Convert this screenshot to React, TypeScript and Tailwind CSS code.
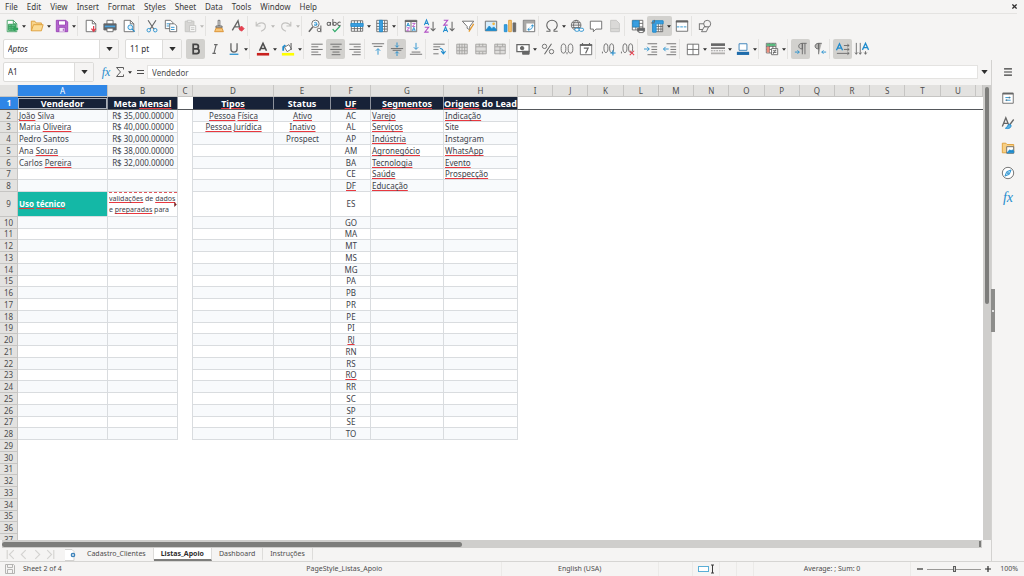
import { useState } from 'react'
import type { ReactNode } from 'react'
import clsx from 'clsx'

const GREY = '#666666'
const BLUE = '#1e8bcd'
const PURPLE = '#b14fc5'
const FADED = '#c4c3c1'

/* ---------- Icons ---------- */

interface IconProps {
  children: ReactNode
  stroke?: string
}

function Icon({ children, stroke = GREY }: IconProps) {
  return (
    <svg viewBox="0 0 16 16" className="size-[14px] shrink-0 overflow-visible" fill="none" stroke={stroke} strokeWidth="1">
      {children}
    </svg>
  )
}

function mergeIcon(middle: string) {
  return (
    <Icon stroke="#a3a2a0">
      <path d="M2 2.500h12v11H2z" fill="#dddcda" />
      <path d={middle} />
    </Icon>
  )
}

const icons = {
  newSheet: (
    <Icon stroke="#3a9d5d">
      <path d="M2.500 1.500h7l4 4v9h-11z" fill="#fff" />
      <path d="M4 6h8v7H4zM4 8.500h8M4 10.500h8M7 6v7" fill="#5fc488" />
      <path d="M9.500 1.500v4h4" />
      <path d="M8 11l4-3v2h3v2.500h-3v2z" fill="#2fa35c" stroke="none" />
    </Icon>
  ),
  open: (
    <Icon stroke="#dd9c35">
      <path d="M1.500 13.500v-11h4l1.500 2h6v2.500" fill="#f7d48c" />
      <path d="M1.500 13.500l2.500-7h11l-2 7z" fill="#fbdb96" />
    </Icon>
  ),
  save: (
    <Icon stroke="#9741b4">
      <path d="M1.500 1.500h11l2 2v11h-13z" fill="#b565cf" />
      <path d="M4 2h8v5H4z" fill="#fff" />
      <path d="M4.500 14.500v-5h7v5" fill="#f4e7f8" />
      <path d="M9.500 11v2.500" />
    </Icon>
  ),
  pdf: (
    <Icon>
      <path d="M2.500 1.500h7l4 4v9h-11z" fill="#fff" />
      <path d="M9.500 1.500v4h4" />
      <path d="M11 8v5M8.500 11l2.500 3 2.500-3" stroke="#e03b4b" strokeWidth="1.400" />
    </Icon>
  ),
  print: (
    <Icon>
      <path d="M4.500 6V1.500h7V6" fill="#fff" />
      <path d="M1 5.500h14v7H1z" fill="#5f6469" />
      <path d="M2 8.500h12" stroke="#4aa3df" strokeWidth="2" />
      <path d="M4.500 10.500h7v4h-7z" fill="#fff" />
    </Icon>
  ),
  preview: (
    <Icon>
      <path d="M2.500 1.500h7l4 4v9h-11z" fill="#fff" />
      <path d="M9.500 1.500v4h4" />
      <circle cx="9.500" cy="9.500" r="2.700" fill="#dff0fb" stroke={BLUE} />
      <path d="M11.500 11.500l3 3" stroke={BLUE} strokeWidth="1.400" />
    </Icon>
  ),
  cut: (
    <Icon>
      <path d="M3.500 1.500l6.500 10M12.500 1.500L6 11.500" strokeWidth="1.300" />
      <circle cx="4.300" cy="12.800" r="2" stroke={BLUE} />
      <circle cx="11.700" cy="12.800" r="2" stroke={BLUE} />
    </Icon>
  ),
  copy: (
    <Icon>
      <path d="M1.500 1.500h6l2.500 2.500v7h-8.500z" fill="#fff" />
      <path d="M3 5.500h4M3 8h3" stroke={BLUE} />
      <path d="M6.500 5.500h5.500l2.500 2.500v6.500h-8z" fill="#fff" />
      <path d="M8 9.500h4M8 12h4" stroke={BLUE} />
    </Icon>
  ),
  paste: (
    <Icon stroke={FADED}>
      <path d="M2.500 2.500h10v12h-10z" fill="#d6d5d3" />
      <path d="M5 1.500h5v2H5z" fill="#fff" />
      <path d="M7.500 7.500h7v7h-7z" fill="#f7f7f6" />
      <path d="M9 10h4M9 12h4" />
    </Icon>
  ),
  brush: (
    <Icon>
      <path d="M7 1.500h2V8H7z" fill="#fff" />
      <path d="M4.500 8h7v2h-7z" fill="#c6c6c6" />
      <path d="M4.500 10.500h7l1.500 4H3z" fill="#f7c577" stroke="#d98e2b" />
    </Icon>
  ),
  clearFormat: (
    <Icon>
      <path d="M1.500 13L8 2l2.500 11M4 9h6" strokeWidth="1.600" />
      <path d="M9 11l3-3 3 3-3 3z" fill="#e4404f" stroke="#e4404f" />
    </Icon>
  ),
  undo: (
    <Icon stroke={FADED}>
      <path d="M2.500 3v5h5M2.500 8C5 3.500 12.500 3 13 8c.2 3-2 5-5 6" strokeWidth="1.300" />
    </Icon>
  ),
  redo: (
    <Icon stroke={FADED}>
      <path d="M13.500 3v5h-5M13.500 8C11 3.500 3.500 3 3 8c-.2 3 2 5 5 6" strokeWidth="1.300" />
    </Icon>
  ),
  find: (
    <Icon>
      <circle cx="8.500" cy="5.500" r="4.200" fill="#fff" />
      <path d="M5.500 9l-4.500 5.500" strokeWidth="1.800" />
      <path d="M7 4.500c1-1 3-1 3 .500v2.500M10 5.800c-3-.3-3.500 1.700-1.800 1.700 1 0 1.800-.500 1.800-1.700" stroke={BLUE} />
      <circle cx="12.500" cy="12.500" r="2" />
      <path d="M14.700 7.500V15" strokeWidth="1.200" />
    </Icon>
  ),
  spelling: (
    <Icon>
      <circle cx="2" cy="5.500" r="1.900" strokeWidth="1.200" />
      <path d="M4 3.500v4M6.700 0v7.500" strokeWidth="1.200" />
      <circle cx="8.800" cy="5.500" r="1.900" strokeWidth="1.200" />
      <path d="M15.500 4a2 2 0 100 3" strokeWidth="1.200" />
      <path d="M6.500 11.500l2.500 3 6-6.500" stroke="#2faa6a" strokeWidth="1.400" />
    </Icon>
  ),
  row: (
    <Icon>
      <path d="M1.500 2h13v12h-13zM1.500 11h13M5 2v12M8.500 2v12M12 2v12" fill="#fff" />
      <path d="M1 5h14v3.500H1z" fill="#3a9ee0" stroke={BLUE} />
    </Icon>
  ),
  column: (
    <Icon>
      <path d="M2 1.500h12v13H2zM2 5h12M2 8.500h12M2 11.500h12M11 1.500v13" fill="#fff" />
      <path d="M5 1.500h3.500v13H5z" fill="#3a9ee0" stroke={BLUE} />
    </Icon>
  ),
  sort: (
    <Icon>
      <path d="M1.500 1.500h13v13h-13zM8 3v11" fill="#fff" />
      <path d="M1 2.500h14" strokeWidth="2" />
      <path d="M3 8.500l1.700-4 1.700 4M3.500 7.500h2.500M9.500 13.500l1.700-4 1.700 4M10 12.500h2.500" stroke={BLUE} />
      <path d="M3 10h3.300L3 13.500h3.300M9.500 5h3.300L9.500 8.500h3.300" stroke={PURPLE} />
    </Icon>
  ),
  sortAsc: (
    <Icon>
      <path d="M1.500 7l2.500-6 2.500 6M2.300 5h3.400" stroke={BLUE} strokeWidth="1.200" />
      <path d="M2 9.500h4.500L2 15h4.500" stroke={PURPLE} strokeWidth="1.200" />
      <path d="M11.500 3v10.500M8.800 10.800l2.700 2.700 2.700-2.700" strokeWidth="1.200" />
    </Icon>
  ),
  sortDesc: (
    <Icon>
      <path d="M2 1.500h4.500L2 7h4.500" stroke={PURPLE} strokeWidth="1.200" />
      <path d="M1.500 15L4 9l2.500 6M2.300 13h3.400" stroke={BLUE} strokeWidth="1.200" />
      <path d="M11.500 3v10.500M8.800 10.800l2.700 2.700 2.700-2.700" strokeWidth="1.200" />
    </Icon>
  ),
  filter: (
    <Icon>
      <path d="M1.500 2.500h13L10 8.500v4l-3-2V8.500z" fill="#fff" />
      <path d="M9 14.500l5.500-9" stroke="#e69a2d" strokeWidth="1.400" />
    </Icon>
  ),
  image: (
    <Icon>
      <path d="M1.500 2.500h13v11h-13z" fill="#d7edfb" />
      <path d="M2 13l4-5 3 3 2-2 3 3v1z" fill={BLUE} stroke={BLUE} />
      <circle cx="11" cy="5.500" r="1.500" fill="#f5b43c" stroke="none" />
    </Icon>
  ),
  chart: (
    <Icon>
      <path d="M1.500 6.500h3v8h-3z" fill="#3a9ee0" stroke={BLUE} />
      <path d="M6.500 1.500h3v13h-3z" fill="#f7c577" stroke="#dd9c35" />
      <path d="M11.500 4.500h3v10h-3z" fill="#6d6d6d" />
    </Icon>
  ),
  pivot: (
    <Icon>
      <path d="M1.500 1.500h13v13h-13z" fill="#fff" />
      <path d="M2 3.500h12M3.500 2v12" strokeWidth="3" stroke="#a9a8a6" />
      <path d="M7 12c4 0 5-1 5-5M10.300 8.500L12 6.500l1.500 2M8.500 10.300L6.500 12l2 1.500" stroke={BLUE} />
    </Icon>
  ),
  omega: (
    <Icon>
      <path d="M1.500 14h4.200v-1.500C3 11 2 9 2 7a6 5.500 0 0112 0c0 2-1 4-3.700 5.500V14h4.200" strokeWidth="1.200" />
    </Icon>
  ),
  link: (
    <Icon>
      <circle cx="7" cy="7" r="5.500" />
      <path d="M1.500 7h11M7 1.500c-4 3-4 8 0 11M7 1.500c4 3 4 8 0 11M2.500 4.200h9M2.500 9.800h9" />
      <rect x="5.500" y="10.500" width="5" height="3.500" rx="1.700" fill="#fff" stroke={BLUE} />
      <rect x="10.500" y="10.500" width="5" height="3.500" rx="1.700" fill="#fff" stroke={BLUE} />
    </Icon>
  ),
  comment: (
    <Icon>
      <path d="M1.500 2.500h13v9H8l-3 3v-3H1.500z" fill="#fff" />
    </Icon>
  ),
  headerFooter: (
    <Icon stroke={FADED}>
      <path d="M3 1.500h6.500l3.500 3.500v9.500H3z" fill="#dad9d7" />
      <path d="M3 11h10" />
    </Icon>
  ),
  printArea: (
    <Icon>
      <path d="M1.500 1.500h12v11h-12zM1.500 5h12M1.500 9h12M5.500 1.500v11M9.500 1.500v11" fill="#fff" />
      <path d="M2 2h7v7H2z" fill="#3a9ee0" stroke={BLUE} />
      <path d="M7.500 10.500h8v3.500h-8z" fill="#5f6469" />
      <path d="M9 13h5v2.500H9z" fill="#fff" />
    </Icon>
  ),
  freeze: (
    <Icon>
      <path d="M3.500 2.500h11v12h-11zM3.500 8.500h11M3.500 11.500h11M9.500 2.500v12M12.500 2.500v12" fill="#fff" />
      <path d="M3 2h12v3.500H7V15H3z" fill="#3a9ee0" stroke={BLUE} />
      <path d="M1 4.500h4M5 1v3" />
    </Icon>
  ),
  split: (
    <Icon>
      <path d="M1.500 2h13v12h-13z" fill="#fff" />
      <path d="M1 3h14" strokeWidth="2" />
      <path d="M2 9h12" stroke={BLUE} strokeDasharray="3 1" />
    </Icon>
  ),
  shapes: (
    <Icon>
      <rect x="1.500" y="5.500" width="6.500" height="6.500" />
      <circle cx="10.500" cy="5.500" r="4" fill="#f5f4f3" />
      <path d="M4 14.500l3-5.500h5l-2.500 5.500z" fill="#f5f4f3" />
    </Icon>
  ),
  bold: <Icon><path d="M4.800 2.800h3.400a2.500 2.500 0 010 5.100H4.800zM4.800 7.900h4a2.700 2.700 0 010 5.400h-4z" stroke="#444" strokeWidth="2" /></Icon>,
  italic: (
    <Icon>
      <path d="M7 3h4M5 13h4M9.300 3l-2.500 10" strokeWidth="1.300" />
    </Icon>
  ),
  underline: (
    <Icon>
      <path d="M4.500 1.500v6.500a3.500 3.500 0 007 0V1.500" strokeWidth="1.500" />
      <path d="M3 14h10" stroke={BLUE} strokeWidth="1.400" />
    </Icon>
  ),
  fontColor: (
    <Icon>
      <path d="M4 10L8 1.500l4 8.500M5.500 7.500h5" stroke="#4d4d4d" strokeWidth="1.800" />
      <path d="M1 14h14" stroke="#c9211e" strokeWidth="3" />
    </Icon>
  ),
  highlight: (
    <Icon>
      <path d="M4 6l5-3 3 5-5 3z" fill="#fff" />
      <path d="M11.500 1v8" strokeWidth="1.300" />
      <path d="M2.500 10V5.500l2.500-2" stroke={BLUE} strokeWidth="2" />
      <path d="M1 14h14" stroke="#ffff00" strokeWidth="3" />
    </Icon>
  ),
  alignLeft: <Icon><path d="M1.500 2.500h13M1.500 5.500h8M1.500 8.500h13M1.500 11.500h8M1.500 14.500h11" /></Icon>,
  alignCenter: <Icon><path d="M1.500 2.500h13M4 5.500h8M1.500 8.500h13M4 11.500h8M3 14.500h10" /></Icon>,
  alignRight: <Icon><path d="M1.500 2.500h13M6.500 5.500h8M1.500 8.500h13M6.500 11.500h8M4.500 14.500h10" /></Icon>,
  alignTop: (
    <Icon>
      <path d="M1 2h14M3 5h10" />
      <path d="M8 14.500V8M5.500 10L8 7.500l2.500 2.500" stroke={BLUE} />
    </Icon>
  ),
  alignMiddle: (
    <Icon>
      <path d="M1 7.500h14M3 9.500h10" />
      <path d="M8 .500V6M6 4l2 2 2-2M8 16v-5M6 13l2-2 2 2" stroke={BLUE} />
    </Icon>
  ),
  alignBottom: (
    <Icon>
      <path d="M1 14h14M3 11.500h10" />
      <path d="M8 1v7M5.500 6L8 8.500 10.500 6" stroke={BLUE} />
    </Icon>
  ),
  wrap: (
    <Icon>
      <path d="M1.500 2.500h13M1.500 5.500h8M1.500 8.500h6M1.500 13.500h6" />
      <path d="M9 7.500c3 0 4 1.500 4 5M10.500 10.500l2.500 3 2.500-3" stroke={BLUE} strokeWidth="1.200" />
    </Icon>
  ),
  mergeCenter: mergeIcon('M2 6h12M2 10h12M5 2v12M8 2v12M11 2v12'),
  mergeCells: mergeIcon('M2 5.500h12M2 10.500h12M6 2v3M10 2v3M6 11v3M10 11v3'),
  unmerge: mergeIcon('M2 5.500h12M2 9.500h12M8 5v9M5 2v3M11 2v3'),
  currency: (
    <Icon>
      <path d="M1 3h14v8H1z" fill="#fff" strokeWidth="1.400" />
      <circle cx="7" cy="7" r="2" fill={GREY} />
      <path d="M7.500 10.500h7.500v3.500H7.500z" fill={GREY} />
    </Icon>
  ),
  percent: (
    <Icon>
      <circle cx="4" cy="5" r="2.500" />
      <circle cx="12" cy="11" r="2.500" />
      <path d="M12 2L4 14" strokeWidth="1.200" />
    </Icon>
  ),
  number: (
    <Icon>
      <ellipse cx="4" cy="7.500" rx="2.700" ry="5.300" />
      <ellipse cx="12" cy="7.500" rx="2.700" ry="5.300" />
      <path d="M8 11.500v2.500" />
    </Icon>
  ),
  date: (
    <Icon>
      <path d="M1.500 3h13v11.500h-13z" fill="#fff" />
      <path d="M1 3.500h14" strokeWidth="2" />
      <path d="M4 1v3M12 1v3M5.500 7h5l-3 6" strokeWidth="1.300" />
    </Icon>
  ),
  addDecimal: (
    <Icon>
      <path d="M.500 11v2" />
      <ellipse cx="4.500" cy="7" rx="2.300" ry="5" />
      <ellipse cx="11" cy="7" rx="2.300" ry="5" />
      <path d="M12.500 9.500v6M9.500 12.500h6" stroke={BLUE} strokeWidth="1.200" />
    </Icon>
  ),
  removeDecimal: (
    <Icon>
      <path d="M.500 11v2" />
      <ellipse cx="4.500" cy="7" rx="2.300" ry="5" />
      <ellipse cx="11" cy="7" rx="2.300" ry="5" />
      <path d="M10 10l5 5M15 10l-5 5" stroke="#e4404f" strokeWidth="1.200" />
    </Icon>
  ),
  indent: (
    <Icon>
      <path d="M4 2h11M8.500 5.500H15M8.500 8.500H15M8.500 11.500H15M4 14.500h11" />
      <path d="M0 8h6M3.500 5.500L6 8l-2.500 2.500" stroke={BLUE} />
    </Icon>
  ),
  outdent: (
    <Icon>
      <path d="M4 2h11M8.500 5.500H15M8.500 8.500H15M8.500 11.500H15M4 14.500h11" />
      <path d="M6.500 8H.700M3 5.500L.500 8 3 10.500" stroke={BLUE} />
    </Icon>
  ),
  borders: <Icon><path d="M1.500 2.500h13v12h-13zM1.500 8.500h13M8 2.500v12" fill="#fff" /></Icon>,
  borderStyle: (
    <Icon>
      <path d="M0 3h16" strokeWidth="3" />
      <path d="M0 7h16" strokeWidth="1.600" />
      <path d="M0 10h16" stroke="#8d8d8d" strokeDasharray="2 1" />
      <path d="M0 13h16" stroke="#b0afad" strokeWidth="2" />
    </Icon>
  ),
  borderColor: (
    <Icon>
      <path d="M3.500 2h9v7.500h-9z" fill="#fff" stroke="#2d79b5" />
      <path d="M1 13h14" stroke="#1f6cab" strokeWidth="3.600" />
    </Icon>
  ),
  conditional: (
    <Icon>
      <path d="M1.500 1.500h11v11h-11zM1.500 5h11M1.500 8.500h11M5 1.500v11M9 1.500v11" fill="#fff" />
      <path d="M2 2h10v2.500H2z" fill="#57b97c" stroke="none" />
      <path d="M2 5.500h3V12H2z" fill="#eb8d7c" stroke="none" />
      <path d="M7.500 7.500h7v7h-7z" fill="#fff" />
      <path d="M9 10h4M9 12h4M12.500 8.500l-3 5" />
    </Icon>
  ),
  leftToRight: (
    <Icon>
      <path d="M9.500 14V1.500h5M12.500 1.500V14M9.500 8C4 8 4 1.500 9.500 1.500z" fill="#c9c8c6" />
      <path d="M1 11.500h5M4 9.500l2 2-2 2" stroke={BLUE} />
    </Icon>
  ),
  rightToLeft: (
    <Icon>
      <path d="M6.500 14V1.500h3.500M6.500 8C1 8 1 1.500 6.500 1.500z" fill="#b5b4b2" />
      <path d="M15 11.500h-5M12 9.500l-2 2 2 2" stroke={BLUE} />
    </Icon>
  ),
  textHorizontal: (
    <Icon>
      <path d="M.500 9.500L4 2l3.500 7.500M2 7h4" stroke={BLUE} strokeWidth="1.500" />
      <path d="M9 4h6M13 2.500L15 4l-2 1.500M9 8.500h6M13 7l2 1.500-2 1.500M1 13h14M13 11.500l2 1.500-2 1.500" />
    </Icon>
  ),
  textVertical: (
    <Icon>
      <path d="M8.500 9L12 1.500 15.500 9M10 6.500h4" stroke={BLUE} strokeWidth="1.500" />
      <path d="M1.500 1v13M0 12l1.500 2L3 12M6 1v13M4.500 12L6 14l1.500-2M12 10.500V14M10.500 12l1.500 2 1.500-2" />
    </Icon>
  ),
}

type IconName = keyof typeof icons

/* ---------- Toolbars ---------- */

interface Tool {
  icon: IconName
  label: string
  menu?: boolean
  active?: boolean
  disabled?: boolean
}

const standardTools: Tool[][] = [
  [
    { icon: 'newSheet', label: 'New', menu: true },
    { icon: 'open', label: 'Open', menu: true },
    { icon: 'save', label: 'Save', menu: true },
  ],
  [
    { icon: 'pdf', label: 'Export as PDF' },
    { icon: 'print', label: 'Print' },
    { icon: 'preview', label: 'Print Preview' },
  ],
  [
    { icon: 'cut', label: 'Cut' },
    { icon: 'copy', label: 'Copy' },
    { icon: 'paste', label: 'Paste', menu: true, disabled: true },
  ],
  [
    { icon: 'brush', label: 'Clone Formatting' },
    { icon: 'clearFormat', label: 'Clear Formatting' },
  ],
  [
    { icon: 'undo', label: 'Undo', menu: true, disabled: true },
    { icon: 'redo', label: 'Redo', menu: true, disabled: true },
  ],
  [
    { icon: 'find', label: 'Find and Replace' },
    { icon: 'spelling', label: 'Spelling' },
  ],
  [
    { icon: 'row', label: 'Row', menu: true },
    { icon: 'column', label: 'Column', menu: true },
  ],
  [
    { icon: 'sort', label: 'Sort' },
    { icon: 'sortAsc', label: 'Sort Ascending' },
    { icon: 'sortDesc', label: 'Sort Descending' },
    { icon: 'filter', label: 'AutoFilter' },
  ],
  [
    { icon: 'image', label: 'Insert Image' },
    { icon: 'chart', label: 'Insert Chart' },
    { icon: 'pivot', label: 'Insert Pivot Table' },
  ],
  [
    { icon: 'omega', label: 'Special Character', menu: true },
    { icon: 'link', label: 'Insert Hyperlink' },
    { icon: 'comment', label: 'Insert Comment' },
    { icon: 'headerFooter', label: 'Headers and Footers', disabled: true },
  ],
  [
    { icon: 'printArea', label: 'Define Print Area' },
    { icon: 'freeze', label: 'Freeze Rows and Columns', menu: true, active: true },
    { icon: 'split', label: 'Split Window' },
  ],
  [{ icon: 'shapes', label: 'Show Draw Functions' }],
]

const formattingTools: Tool[][] = [
  [
    { icon: 'bold', label: 'Bold', active: true },
    { icon: 'italic', label: 'Italic' },
    { icon: 'underline', label: 'Underline', menu: true },
  ],
  [
    { icon: 'fontColor', label: 'Font Color', menu: true },
    { icon: 'highlight', label: 'Background Color', menu: true },
  ],
  [
    { icon: 'alignLeft', label: 'Align Left' },
    { icon: 'alignCenter', label: 'Center Horizontally', active: true },
    { icon: 'alignRight', label: 'Align Right' },
  ],
  [
    { icon: 'alignTop', label: 'Align Top' },
    { icon: 'alignMiddle', label: 'Center Vertically', active: true },
    { icon: 'alignBottom', label: 'Align Bottom' },
  ],
  [{ icon: 'wrap', label: 'Wrap Text' }],
  [
    { icon: 'mergeCenter', label: 'Merge and Center', disabled: true },
    { icon: 'mergeCells', label: 'Merge Cells', disabled: true },
    { icon: 'unmerge', label: 'Unmerge Cells', disabled: true },
  ],
  [
    { icon: 'currency', label: 'Format as Currency', menu: true },
    { icon: 'percent', label: 'Format as Percent' },
    { icon: 'number', label: 'Format as Number' },
    { icon: 'date', label: 'Format as Date' },
  ],
  [
    { icon: 'addDecimal', label: 'Add Decimal Place' },
    { icon: 'removeDecimal', label: 'Delete Decimal Place' },
  ],
  [
    { icon: 'indent', label: 'Increase Indent' },
    { icon: 'outdent', label: 'Decrease Indent' },
  ],
  [
    { icon: 'borders', label: 'Borders', menu: true },
    { icon: 'borderStyle', label: 'Border Style', menu: true },
    { icon: 'borderColor', label: 'Border Color', menu: true },
  ],
  [{ icon: 'conditional', label: 'Conditional', menu: true }],
  [
    { icon: 'leftToRight', label: 'Left-To-Right', active: true },
    { icon: 'rightToLeft', label: 'Right-To-Left' },
  ],
  [
    { icon: 'textHorizontal', label: 'Text direction from left to right', active: true },
    { icon: 'textVertical', label: 'Text direction from top to bottom' },
  ],
]

function SmallCaret({ faded }: { faded?: boolean }) {
  return (
    <svg viewBox="0 0 6 4" className="h-[3px] w-[4px]" fill={faded ? '#b9b8b6' : '#2e2e2e'}>
      <path d="M0 0h6L3 4z" />
    </svg>
  )
}

function Caret() {
  return (
    <svg viewBox="0 0 8 5" className="h-[4px] w-[7px]" fill="#2e2e2e">
      <path d="M0 0h8L4 5z" />
    </svg>
  )
}

function ToolGroups({ groups }: { groups: Tool[][] }) {
  return (
    <div className="flex items-center">
      {groups.map((group, i) => (
        <div key={i} className="flex items-center">
          {i > 0 && <span className="mr-[3px] h-5 w-px bg-[#e4e3e1]" />}
          {group.map((tool) => (
            <div key={tool.label} className={clsx('flex h-5 items-center rounded-xs', tool.active && 'bg-[#d2d1ce]')}>
              <button
                type="button"
                aria-label={tool.label}
                aria-pressed={tool.active}
                disabled={tool.disabled}
                className="flex h-5 w-[19px] items-center justify-center"
              >
                {icons[tool.icon]}
              </button>
              {tool.menu && (
                <button type="button" aria-label={`${tool.label} options`} disabled={tool.disabled} className="flex h-5 w-[6px] items-center justify-center">
                  <SmallCaret faded={tool.disabled} />
                </button>
              )}
            </div>
          ))}
        </div>
      ))}
    </div>
  )
}

interface ComboProps {
  label: string
  initial: string
  className: string
  inputClassName?: string
}

function Combo({ label, initial, className, inputClassName }: ComboProps) {
  const [value, setValue] = useState(initial)

  return (
    <div className={clsx('flex h-5 shrink-0 overflow-hidden rounded-xs border border-[#dddcda] bg-white', className)}>
      <input
        aria-label={label}
        value={value}
        onChange={(e) => setValue(e.target.value)}
        className={clsx('min-w-0 flex-1 px-1 text-[8px] text-[#2e2e2e] outline-none', inputClassName)}
      />
      <button type="button" aria-label={`${label} list`} className="flex w-[19px] items-center justify-center border-l border-[#dddcda] bg-[#f5f4f3]">
        <Caret />
      </button>
    </div>
  )
}

const menus = ['File', 'Edit', 'View', 'Insert', 'Format', 'Styles', 'Sheet', 'Data', 'Tools', 'Window', 'Help']

function MenuBar() {
  return (
    <nav className="mr-[7px] flex h-[14px] items-center gap-[9px] border-b border-[#e4e3e1] pl-[5px]">
      {menus.map((menu) => (
        <button key={menu} type="button" className="text-[8px] leading-[12px] text-[#3a3a3a]">
          {menu}
        </button>
      ))}
      <button type="button" aria-label="Close document" className="ml-auto">
        <svg viewBox="0 0 6 6" className="size-[5px]" stroke="#2e2e2e" strokeWidth="1.500">
          <path d="M.500 .500l5 5M5.500 .500l-5 5" />
        </svg>
      </button>
    </nav>
  )
}

function FormulaBar() {
  const [formula, setFormula] = useState('Vendedor')

  return (
    <div className="flex h-6 items-center">
      <Combo label="Name Box" initial="A1" className="ml-[3px] w-[91px]" />
      <div className="flex w-[53px] items-center gap-[5px] pl-[7px] text-[#4d4d4d]">
        <button type="button" aria-label="Function Wizard" className="w-[10px] font-['Liberation_Serif',serif] text-[12px] leading-[14px] text-[#1e8bcd] italic">fx</button>
        <button type="button" aria-label="Select Function" className="flex items-center gap-[4px]">
          <svg viewBox="0 0 8 10" className="h-[10px] w-[8px]" fill="none" stroke="#5c5c5c" strokeWidth="1">
            <path d="M7.500 2.500v-2h-7L4.500 5 .500 9.500h7v-2" />
          </svg>
          <SmallCaret />
        </button>
        <button type="button" aria-label="Formula">
          <svg viewBox="0 0 8 6" className="h-[6px] w-[8px]" stroke="#4d4d4d" strokeWidth="1">
            <path d="M0 1.500h7M0 4.500h7" />
          </svg>
        </button>
      </div>
      <input
        aria-label="Input line"
        value={formula}
        onChange={(e) => setFormula(e.target.value)}
        className="h-[14px] min-w-0 flex-1 border border-[#e4e3e1] bg-white px-1 text-[8px] text-[#4d4d4d] outline-none"
      />
      <button type="button" aria-label="Expand Formula Bar" className="flex w-[13px] justify-center">
        <Caret />
      </button>
    </div>
  )
}

/* ---------- Sheet ---------- */

const columns = [
  { name: 'A', width: 'w-[90px]' },
  { name: 'B', width: 'w-[70px]' },
  { name: 'C', width: 'w-[15px]' },
  { name: 'D', width: 'w-[81px]' },
  { name: 'E', width: 'w-[57px]' },
  { name: 'F', width: 'w-[40px]' },
  { name: 'G', width: 'w-[73px]' },
  { name: 'H', width: 'w-[74px]' },
  ...'IJKLMNOPQRSTU'.split('').map((name) => ({ name, width: '' })),
]

const headings: Record<string, string> = {
  A: 'Vendedor',
  B: 'Meta Mensal',
  D: 'Tipos',
  E: 'Status',
  F: 'UF',
  G: 'Segmentos',
  H: 'Origens do Lead',
}

// Values below the heading row, starting at row 2
const lists: Record<string, string[]> = {
  A: ['João Silva', 'Maria Oliveira', 'Pedro Santos', 'Ana Souza', 'Carlos Pereira'],
  B: ['R$ 35,000.00000', 'R$ 40,000.00000', 'R$ 30,000.00000', 'R$ 38,000.00000', 'R$ 32,000.00000'],
  D: ['Pessoa Física', 'Pessoa Jurídica'],
  E: ['Ativo', 'Inativo', 'Prospect'],
  F: [
    'AC', 'AL', 'AP', 'AM', 'BA', 'CE', 'DF', 'ES', 'GO', 'MA', 'MT', 'MS', 'MG', 'PA',
    'PB', 'PR', 'PE', 'PI', 'RJ', 'RN', 'RS', 'RO', 'RR', 'SC', 'SP', 'SE', 'TO',
  ],
  G: ['Varejo', 'Serviços', 'Indústria', 'Agronegócio', 'Tecnologia', 'Saúde', 'Educação'],
  H: ['Indicação', 'Site', 'Instagram', 'WhatsApp', 'Evento', 'Prospecção'],
}

const unknownWords = new Set([
  'Vendedor', 'Mensal', 'Tipos', 'UF', 'Segmentos', 'Origens', 'João', 'Oliveira', 'Souza', 'Pereira',
  'Pessoa', 'Física', 'Jurídica', 'Ativo', 'Inativo', 'DF', 'RJ', 'RO', 'Varejo', 'Serviços', 'Indústria',
  'Agronegócio', 'Tecnologia', 'Saúde', 'Educação', 'Indicação', 'WhatsApp', 'Evento', 'Prospecção',
  'Uso', 'técnico', 'validações', 'dados', 'preparadas',
])

const LAST_LIST_ROW = 28
const rows = Array.from({ length: 36 }, (_, i) => i + 2)

function rowHeight(row: number) {
  if (row === 9) return 'h-[25px]'
  return row % 4 === 3 ? 'h-[11px]' : 'h-[12px]'
}

function Spelled({ text }: { text: string }) {
  return (
    <>
      {text.split(' ').map((word, i) => (
        <span key={i}>
          {i > 0 && ' '}
          <span className={clsx(unknownWords.has(word) && 'underline decoration-[#e8383f] decoration-1 underline-offset-1 [text-decoration-skip-ink:none]')}>
            {word}
          </span>
        </span>
      ))}
    </>
  )
}

function NoteCell() {
  return (
    <div className="relative h-6 overflow-hidden border-t border-dashed border-[#e0555a] text-[7px] leading-[11px] whitespace-nowrap">
      <Spelled text="validações de dados" />
      <br />
      <Spelled text="e preparadas para" />
      <svg viewBox="0 0 3 6" className="absolute top-[9px] right-0 h-[5px] w-[3px]" fill="#7a2020">
        <path d="M0 0l3 3-3 3z" />
      </svg>
    </div>
  )
}

function BodyCell({ row, column }: { row: number; column: string }) {
  if (!(column in headings) || row > LAST_LIST_ROW) {
    return <td className={clsx('p-0', column === 'C' && row <= LAST_LIST_ROW && 'border-r border-[#d9dcdf]')} />
  }

  const border = 'border-r border-b border-[#d9dcdf]'
  if (row === 9 && column === 'A') {
    return (
      <td className={clsx('bg-[#14b8a6] p-0 pl-px font-bold text-white', border)}>
        <Spelled text="Uso técnico" />
      </td>
    )
  }
  if (row === 9 && column === 'B') {
    return <td className={clsx('p-0 pl-px align-top', border)}><NoteCell /></td>
  }

  const text = lists[column][row - 2]
  const centered = ['B', 'D', 'E', 'F'].includes(column)
  return (
    <td className={clsx('p-0 pl-px whitespace-nowrap', border, row % 2 === 0 && 'bg-[#f8fafc]', centered && 'text-center')}>
      {text && <Spelled text={text} />}
    </td>
  )
}

function Sheet() {
  const headerCell = 'border-r border-b border-[#c6c5c3] p-0 text-center text-[8px] font-normal'

  return (
    <div className="min-h-0 min-w-0 flex-1 overflow-hidden bg-white">
      <table className="w-full table-fixed border-separate border-spacing-0 text-[8px] leading-[10px] text-[#3d424a]">
        <colgroup>
          <col className="w-[18px]" />
          {columns.map((column) => (
            <col key={column.name} className={column.width} />
          ))}
          <col className="w-[7px]" />
        </colgroup>
        <thead>
          <tr className="h-3">
            <th className={clsx(headerCell, 'bg-[#e3e2e0]')} />
            {columns.map(({ name }) => (
              <th key={name} scope="col" className={clsx(headerCell, name === 'A' ? 'bg-[#2f86e6] font-bold text-white' : 'bg-[#e3e2e0] text-[#4d4d4d]')}>
                {name}
              </th>
            ))}
            <th className={clsx(headerCell, 'bg-[#e3e2e0]')} />
          </tr>
        </thead>
        <tbody>
          <tr className="h-[13px]">
            <th scope="row" className="border-b border-[#55585c] bg-[#2f86e6] p-0 text-center font-bold text-white">1</th>
            {columns.map(({ name }) => (
              <td
                key={name}
                className={clsx(
                  'border-b border-[#55585c] p-0 text-center text-[9px] leading-[11px] font-bold whitespace-nowrap text-white',
                  name in headings && 'border-r border-r-[#8d929c] bg-[#172238]',
                )}
              >
                {name === 'A' ? (
                  <div className="outline outline-[#aab0ba] -outline-offset-1">
                    <Spelled text={headings.A} />
                  </div>
                ) : (
                  headings[name] && <Spelled text={headings[name]} />
                )}
              </td>
            ))}
            <td className="border-b border-[#55585c] p-0" />
          </tr>
          {rows.map((row) => (
            <tr key={row} className={rowHeight(row)}>
              <th scope="row" className={clsx(headerCell, 'bg-[#e3e2e0] text-[#4d4d4d]')}>{row}</th>
              {columns.map(({ name }) => (
                <BodyCell key={name} row={row} column={name} />
              ))}
              <td className="p-0" />
            </tr>
          ))}
        </tbody>
      </table>
    </div>
  )
}

/* ---------- Bottom and side panels ---------- */

function SheetTabs() {
  const [active, setActive] = useState('Listas_Apoio')
  const tabs = ['Cadastro_Clientes', 'Listas_Apoio', 'Dashboard', 'Instruções']
  const arrows = ['M2 1v8M8 1L4 5l4 4', 'M7 1L3 5l4 4', 'M3 1l4 4-4 4', 'M8 1v8M2 1l4 4-4 4']

  return (
    <div className="flex h-[13px] items-center text-[7px] text-[#4d4d4d]">
      <div className="flex w-[59px] justify-between pr-[3px] pl-[5px]">
        {['First', 'Previous', 'Next', 'Last'].map((label, i) => (
          <button key={label} type="button" aria-label={`${label} sheet`} disabled>
            <svg viewBox="0 0 10 10" className="size-[11px]" fill="none" stroke="#d3d2d0" strokeWidth="1">
              <path d={arrows[i]} />
            </svg>
          </button>
        ))}
      </div>
      <button type="button" aria-label="Add sheet" className="flex w-[21px] justify-center">
        <svg viewBox="0 0 12 12" className="size-[12px]" fill="none">
          <path d="M1 .500h7l2 2v9H1" fill="#fff" stroke="#d3d2d0" />
          <circle cx="9" cy="6" r="2.300" fill="#2d79b5" />
          <path d="M9 4.800v2.400M7.800 6h2.400" stroke="#fff" strokeWidth=".800" />
        </svg>
      </button>
      <div role="tablist" className="flex h-full">
        {tabs.map((tab) => (
          <button
            key={tab}
            type="button"
            role="tab"
            aria-selected={tab === active}
            onClick={() => setActive(tab)}
            className={clsx(
              'border-r border-r-[#dddcda] border-b-2 px-[7px] leading-[11px]',
              tab === active ? 'border-b-[#7d7d7b] bg-white font-bold text-[#2e2e2e]' : 'border-b-transparent',
            )}
          >
            {tab}
          </button>
        ))}
      </div>
    </div>
  )
}

function StatusBar() {
  const [zoom, setZoom] = useState(100)
  const cell = 'flex h-full items-center justify-center border-r border-[#ebeae8]'

  return (
    <footer className="flex h-[15px] items-center border-t border-[#d6d5d3] text-[7px] text-[#4d4d4d]">
      <div className="flex w-[188px] items-center gap-[8px] pl-[5px]">
        <svg viewBox="0 0 10 10" className="size-[10px]" fill="none" stroke="#b5b4b2">
          <path d="M.500 .500h8l1 1v8h-9zM2.500 .500v3h5v-3M2.500 9.500v-4h5v4" />
        </svg>
        Sheet 2 of 4
      </div>
      <div className={clsx(cell, 'flex-2')}>PageStyle_Listas_Apoio</div>
      <div className={clsx(cell, 'flex-1')}>English (USA)</div>
      <div className={clsx(cell, 'w-[34px]')} />
      <div className={clsx(cell, 'w-[27px] gap-[2px]')}>
        <svg viewBox="0 0 16 10" className="h-[10px] w-[16px]" fill="none">
          <rect x=".500" y="2.500" width="10" height="5" fill="#fff" stroke="#5aaed6" />
          <path d="M13 1h3M14.500 1v8M13 9h3" stroke="#3a3a3a" />
        </svg>
      </div>
      <div className={clsx(cell, 'w-[17px]')} />
      <div className={clsx(cell, 'w-[17px]')} />
      <div className={clsx(cell, 'flex-1')}>Average: ; Sum: 0</div>
      <div className="flex items-center gap-[4px] pr-[6px] pl-[6px]">
        <button type="button" aria-label="Zoom out" onClick={() => setZoom(Math.max(20, zoom - 10))}>
          <svg viewBox="0 0 6 6" className="size-[6px]" stroke="#2e2e2e" strokeWidth="1.200"><path d="M0 3h6" /></svg>
        </button>
        <input
          type="range"
          aria-label="Zoom"
          min={20}
          max={180}
          value={zoom}
          onChange={(e) => setZoom(Number(e.target.value))}
          className="h-2 w-[54px] appearance-none bg-[linear-gradient(#9a9997,#9a9997)] bg-[length:100%_1px] bg-center bg-no-repeat [&::-webkit-slider-thumb]:h-[6px] [&::-webkit-slider-thumb]:w-[3px] [&::-webkit-slider-thumb]:appearance-none [&::-webkit-slider-thumb]:border [&::-webkit-slider-thumb]:border-[#5c5c5c] [&::-webkit-slider-thumb]:bg-[#d2d1ce]"
        />
        <button type="button" aria-label="Zoom in" onClick={() => setZoom(Math.min(180, zoom + 10))}>
          <svg viewBox="0 0 6 6" className="size-[6px]" stroke="#2e2e2e" strokeWidth="1.200"><path d="M0 3h6M3 0v6" /></svg>
        </button>
        <span className="pl-[5px]">{zoom}%</span>
      </div>
    </footer>
  )
}

function SideBar() {
  return (
    <aside className="relative flex w-[33px] flex-col items-center gap-[11px] border-l border-[#d3d2d0] pt-[5px]">
      <button type="button" aria-label="Sidebar settings">
        <Icon stroke="#3a3a3a"><path d="M3.500 4.500h9M3.500 8h9M3.500 11.500h9" strokeWidth="1.300" /></Icon>
      </button>
      <button type="button" aria-label="Properties" className="mt-px">
        <Icon>
          <path d="M2 2.500h12v11.500H2z" fill="#fff" />
          <path d="M2 3h12" strokeWidth="2" />
          <path d="M5 7.500h6M5 10.500h6" stroke={BLUE} />
          <path d="M9.500 6.500v2M6.500 9.500v2" />
        </Icon>
      </button>
      <button type="button" aria-label="Styles">
        <Icon>
          <path d="M1.500 12L5.500 2l4 10M3 8.500h5" strokeWidth="1.500" />
          <path d="M14.500 4L10 10" strokeWidth="1.500" />
          <path d="M10 9.500c-3 0-2 3.500-5 4.500 3 1 7 0 6.500-3.500z" fill="#5ab0e4" stroke={BLUE} />
        </Icon>
      </button>
      <button type="button" aria-label="Gallery">
        <Icon stroke="#dd9c35">
          <path d="M1.500 13.500v-11h4l1.500 1.500h7.500v9.500z" fill="#f7cf84" />
          <path d="M6.500 6.500h8v7.500h-8z" fill="#fff" stroke={GREY} />
          <path d="M7 13.500l3-3.500 1.500 1.500L13 10l1.500 1.500v2z" fill={BLUE} stroke={BLUE} />
        </Icon>
      </button>
      <button type="button" aria-label="Navigator">
        <Icon>
          <circle cx="8" cy="8" r="6.500" fill="#fff" />
          <path d="M11.500 4.500L9.500 9.500l-5 2 2-5z" fill="#b9def4" stroke={BLUE} />
          <circle cx="8" cy="8" r="1" fill={BLUE} stroke="none" />
        </Icon>
      </button>
      <button type="button" aria-label="Functions" className="font-['Liberation_Serif',serif] text-[14px] leading-[14px] text-[#1e8bcd] italic">fx</button>
      <button type="button" aria-label="Collapse sidebar" className="absolute top-[229px] -left-px flex h-[43px] w-[4px] items-center justify-center bg-[#8d8d8b]">
        <span className="size-[2px] rounded-full bg-white" />
      </button>
    </aside>
  )
}

export default function App() {
  return (
    <div className="flex h-screen flex-col overflow-hidden bg-[#f5f4f3] font-['Noto_Sans',sans-serif] [&_button]:outline-none">
      <MenuBar />
      <div className="flex h-6 items-center pl-[2px]">
        <ToolGroups groups={standardTools} />
      </div>
      <div className="flex h-[22px] items-center pl-[3px]">
        <Combo label="Font Name" initial="Aptos" className="mr-[6px] w-[116px]" inputClassName="italic" />
        <Combo label="Font Size" initial="11 pt" className="mr-[4px] w-[57px]" />
        <ToolGroups groups={formattingTools} />
      </div>

      <div className="flex min-h-0 flex-1">
        <div className="flex min-w-0 flex-1 flex-col">
          <FormulaBar />
          <div className="flex min-h-0 flex-1 pt-px">
            <Sheet />
            <div className="w-2 bg-[#cfcecc] px-[2px] pt-[2px]">
              <div className="h-[48%] rounded-full bg-[#7d7d7b]" />
            </div>
          </div>
          <div className="mr-[9px] ml-[2px] flex h-2 items-center justify-between bg-[#cfcecc] pr-px">
            <div className="h-[5px] w-[47%] rounded-full bg-[#7d7d7b]" />
            <div className="h-[6px] w-[2px] bg-[#7d7d7b]" />
          </div>
          <SheetTabs />
        </div>
        <SideBar />
      </div>
      <StatusBar />
    </div>
  )
}
